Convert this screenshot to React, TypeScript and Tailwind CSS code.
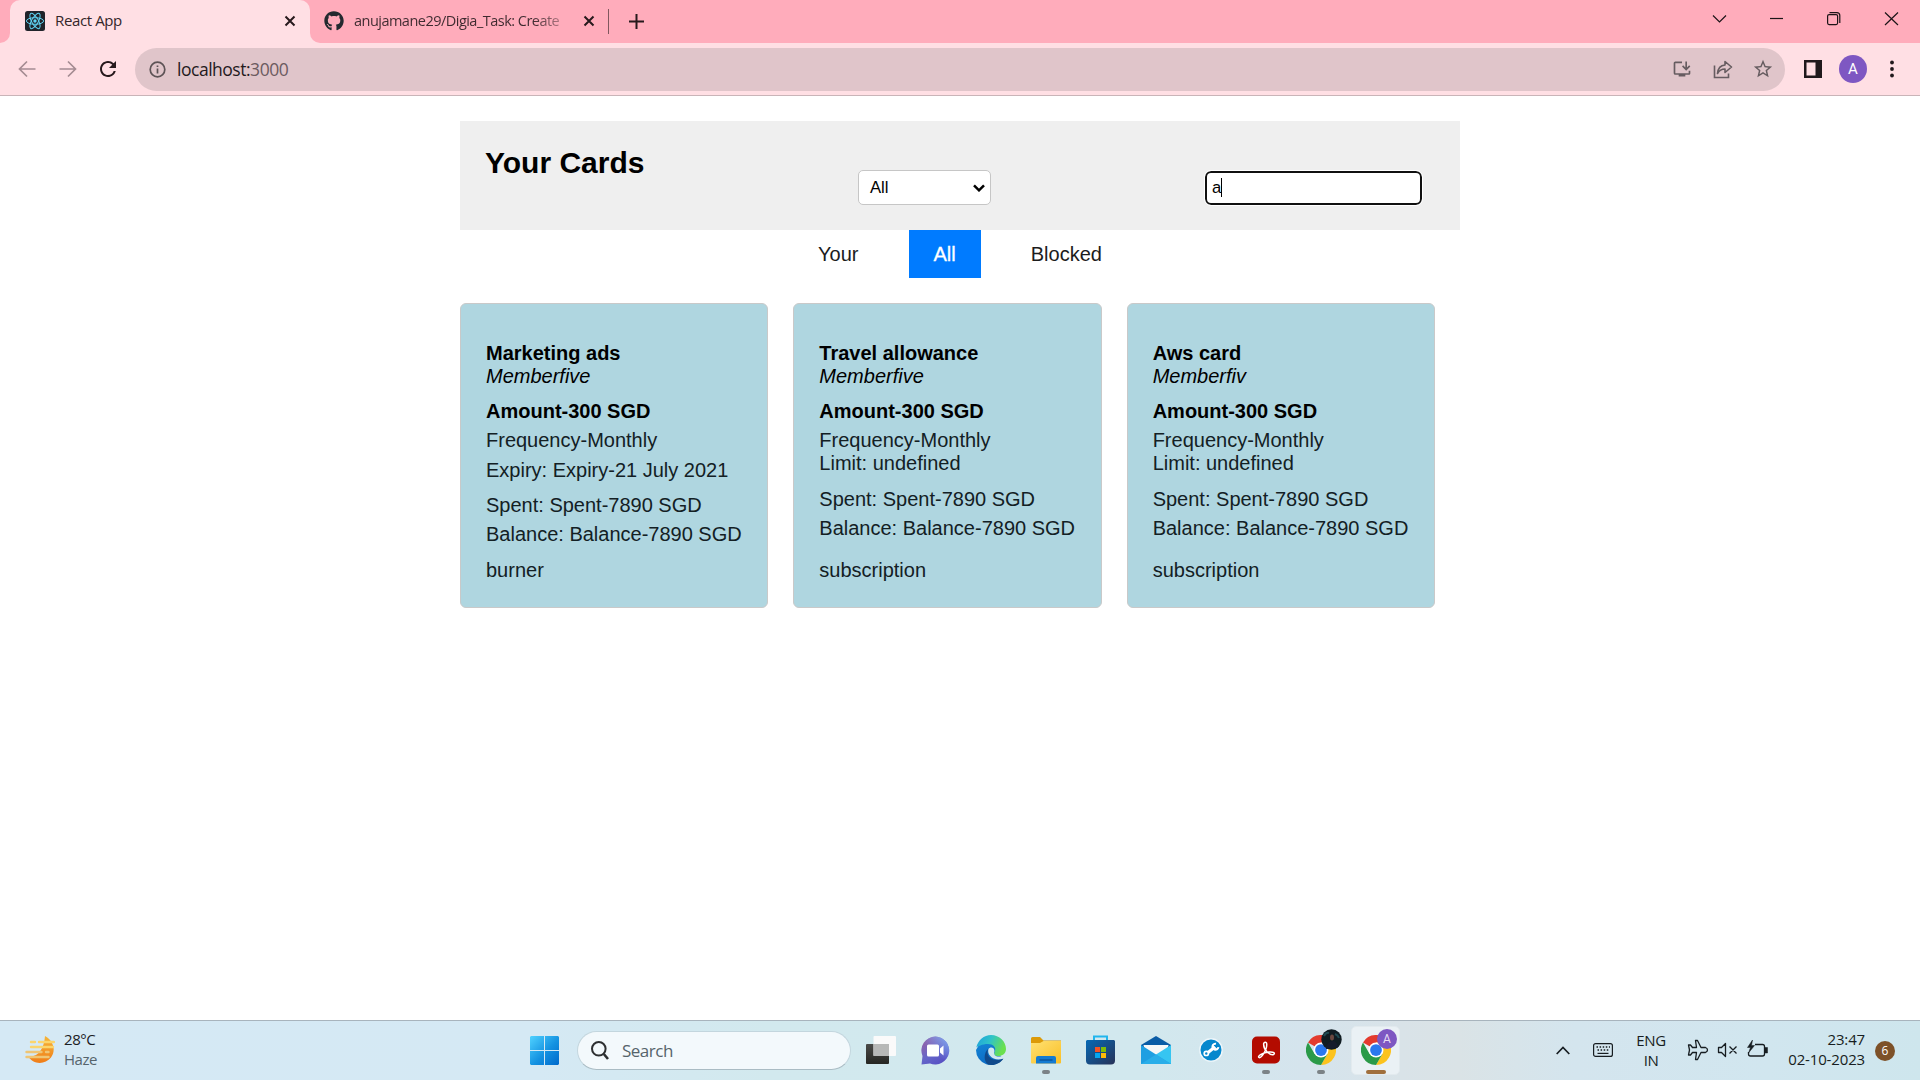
import React from "react";
import { FaGithub } from "react-icons/fa";
import { MdInstallDesktop, MdRefresh, MdStarBorder } from "react-icons/md";

type Card = {
  name: string;
  owner: string;
  expiry?: string;
  limit?: string;
  type: string;
};

const cards: Card[] = [
  { name: "Marketing ads", owner: "Memberfive", expiry: "Expiry-21 July 2021", type: "burner" },
  { name: "Travel allowance", owner: "Memberfive", limit: "undefined", type: "subscription" },
  { name: "Aws card", owner: "Memberfiv", limit: "undefined", type: "subscription" },
];

function CloseIcon() {
  return (
    <svg width="12" height="12" viewBox="0 0 12 12" stroke="#27191c" strokeWidth="2" className="shrink-0">
      <path d="M1.5 1.5 10.5 10.5M10.5 1.5 1.5 10.5" />
    </svg>
  );
}

function ReactLogo() {
  return (
    <svg width="20" height="20" viewBox="0 0 20 20" fill="none" stroke="#5fd3f3" strokeWidth="1" className="shrink-0">
      <rect width="20" height="20" rx="2.5" fill="#20232a" stroke="none" />
      <ellipse cx="10" cy="10" rx="8.6" ry="3.3" />
      <ellipse cx="10" cy="10" rx="8.6" ry="3.3" transform="rotate(60 10 10)" />
      <ellipse cx="10" cy="10" rx="8.6" ry="3.3" transform="rotate(120 10 10)" />
      <circle cx="10" cy="10" r="1.7" fill="#5fd3f3" stroke="none" />
    </svg>
  );
}

function TabStrip() {
  return (
    <div className="flex h-[43px] shrink-0 bg-[#ffacbb]">
      <div className="flex h-full w-[10px] bg-[#ffdfe4]">
        <div className="h-full w-full rounded-br-[10px] bg-[#ffacbb]" />
      </div>
      <div className="flex h-full w-[300px] items-center rounded-t-[10px] bg-[#ffdfe4] pr-[14px] pb-px pl-[15px]">
        <ReactLogo />
        <span className="ml-[10px] grow pb-px text-[15px] tracking-[-0.38px] text-[#33262a]">React App</span>
        <CloseIcon />
      </div>
      <div className="h-full w-[10px] bg-[#ffdfe4]">
        <div className="h-full w-full rounded-bl-[10px] bg-[#ffacbb]" />
      </div>
      <div className="flex h-full w-[288px] items-center pb-px pl-[4px]">
        <FaGithub size={20} color="#24292f" className="shrink-0" />
        <span className="ml-[10px] w-[213px] bg-linear-to-r from-[#3e2a2f] from-84% to-[#3e2a2f40] bg-clip-text pb-px text-[14.5px] tracking-[-0.52px] whitespace-nowrap text-transparent">
          anujamane29/Digia_Task: Create
        </span>
        <span className="ml-[16px]">
          <CloseIcon />
        </span>
      </div>
      <div className="mt-[9px] h-[25px] w-px bg-[#80575e]" />
      <svg width="15" height="15" viewBox="0 0 15 15" stroke="#27191c" strokeWidth="2" className="mt-[14px] ml-[20px]">
        <path d="M0 7.5H15M7.5 0V15" />
      </svg>
      <div className="grow" />
      <svg width="220" height="36" viewBox="-20 0 220 36" fill="none" stroke="#1c1417" strokeWidth="1.2">
        <path d="M-7 15.500-.5 22 6 15.500" />
        <path d="M50 18.500H63" />
        <rect x="107.600" y="14.600" width="10" height="10" rx="1.500" />
        <path d="M109.500 12.600h7.300a3 3 0 0 1 3 3v7.300" />
        <path d="M165 12.500 178 25M178 12.500 165 25" />
      </svg>
    </div>
  );
}

function Toolbar() {
  return (
    <div className="flex h-[53px] shrink-0 items-center border-b border-[#c9b4b8] bg-[#ffdfe4]">
      <svg width="100" height="20" viewBox="0 0 100 20" fill="none" stroke="#a58c92" strokeWidth="1.700">
        <path d="M35.500 10H20M27 2.500 19.500 10 27 17.500M59.500 10H75M68 2.500 75.500 10 68 17.500" />
      </svg>
      <div className="ml-[-4px] w-[39px]">
        <MdRefresh size={24} color="#27191c" />
      </div>
      <div className="flex h-[43px] w-[1650px] items-center rounded-full bg-[#e0c5ca] pr-[11px] pl-[14px]">
        <svg width="17" height="17" viewBox="0 0 17 17" fill="none" stroke="#5d5356" strokeWidth="1.700">
          <circle cx="8.500" cy="8.500" r="7.300" />
          <path d="M8.500 7.500V12.500M8.500 4.500V6" />
        </svg>
        <div className="ml-[11px] grow text-[17.5px] tracking-[-0.48px]">
          <span className="text-[#241a1d]">localhost:</span>
          <span className="text-[#6c5b60]">3000</span>
        </div>
        <MdInstallDesktop size={20} color="#665c60" />
        <svg width="20" height="20" viewBox="0 0 20 20" fill="none" stroke="#665c60" strokeWidth="1.600" className="ml-[21px]">
          <path d="M1.500 6.500V18.500H15.500V14.500" />
          <path d="M4.500 14.500C5 9 8 6.300 12 6V2.500L18.500 8 12 13.500V10C9 10 6.500 11 4.500 14.500Z" strokeLinejoin="round" />
        </svg>
        <MdStarBorder size={22} color="#665c60" className="ml-[19px]" />
      </div>
      <svg width="18" height="18" viewBox="0 0 18 18" className="ml-[19px]">
        <path fill="#20191c" fillRule="evenodd" d="M0 0H18V18H0ZM2.500 2.500V15.500H11.500V2.500Z" />
      </svg>
      <div className="ml-[17px] flex size-[28px] items-center justify-center rounded-full bg-[#7e57c2] font-[Roboto] text-[15px] text-white">
        A
      </div>
      <svg width="4" height="18" viewBox="0 0 4 18" fill="#20191c" className="ml-[23px]">
        <circle cx="2" cy="2.500" r="1.900" />
        <circle cx="2" cy="9" r="1.900" />
        <circle cx="2" cy="15.500" r="1.900" />
      </svg>
    </div>
  );
}

function CardView({ card }: { card: Card }) {
  return (
    <div className="flex h-[305px] flex-1 flex-col rounded-[6px] border border-[#c9c9c9] bg-[#afd6e0] px-[25px] pt-[38px] text-[20px] leading-[23px] text-[#132024]">
      <div className="font-bold text-black">{card.name}</div>
      <div className="text-black italic">{card.owner}</div>
      <div className="mt-[12px] font-bold text-black">Amount-300 SGD</div>
      <div className="mt-[6px]">Frequency-Monthly</div>
      {card.expiry ? (
        <div className="mt-[7px] mb-[6px]">Expiry: {card.expiry}</div>
      ) : (
        <div className="mb-[7px]">Limit: {card.limit}</div>
      )}
      <div className="mt-[6px]">Spent: Spent-7890 SGD</div>
      <div className="mt-[6px]">Balance: Balance-7890 SGD</div>
      <div className="mt-auto mb-[25px]">{card.type}</div>
    </div>
  );
}

function Page() {
  return (
    <main className="mx-auto w-[1000px] grow pt-[25px] font-['Liberation_Sans',Arial,sans-serif]">
      <header className="flex h-[109px] bg-[#efefef] pl-[25px]">
        <h2 className="w-[373px] pt-[24px] text-[30px] leading-[36px] font-bold text-black">Your Cards</h2>
        <div className="mt-[49px] flex h-[35px] w-[133px] items-center justify-between rounded-[5px] border border-[#c6c6c6] bg-white pr-[5px] pl-[11px] text-[16.67px] text-black">
          All
          <svg width="12" height="8" viewBox="0 0 12 8" fill="none" stroke="#000" strokeWidth="2.500">
            <path d="M1 1.300 6 6.300 11 1.300" />
          </svg>
        </div>
        <div className="mt-[50px] ml-[214px] flex h-[34px] w-[217px] items-center rounded-[6px] border-2 border-[#101010] bg-white pb-[2px] pl-[5px] text-[16.67px] text-black outline outline-white">
          a<span className="h-[19px] w-px bg-black" />
        </div>
      </header>
      <nav className="flex h-[48px] justify-center gap-[25px] text-[20px] text-[#1c1c1c]">
        <div className="flex items-center px-[25px]">Your</div>
        <div className="flex items-center bg-[#007bff] px-[25px] text-white [-webkit-text-stroke:0.3px_white]">All</div>
        <div className="flex items-center px-[25px]">Blocked</div>
      </nav>
      <section className="mt-[25px] flex gap-[25px] pr-[25px]">
        {cards.map((card) => (
          <CardView key={card.name} card={card} />
        ))}
      </section>
    </main>
  );
}

function Slot({ children, mark }: { children: React.ReactNode; mark?: boolean }) {
  return (
    <div className="relative flex h-full w-[55px] shrink-0 items-center justify-center pb-px">
      {children}
      {mark && <div className="absolute bottom-[6px] h-[4px] w-[8px] rounded-full bg-[#7b8286]" />}
    </div>
  );
}

function ChromeLogo() {
  return (
    <svg width="30" height="30" viewBox="0 0 48 48">
      <path fill="#e33b2e" d="M24 24 3.200 12A24 24 0 0 1 44.800 12H24Z" />
      <path fill="#fcc31e" d="M44.800 12A24 24 0 0 1 24 48L34.400 30 24 12Z" />
      <path fill="#2a9a48" d="M24 48A24 24 0 0 1 3.200 12L13.600 30 34.400 30Z" />
      <circle cx="24" cy="24" r="12" fill="#fff" />
      <circle cx="24" cy="24" r="9.400" fill="#2b78ee" />
    </svg>
  );
}

function Taskbar() {
  return (
    <footer className="flex h-[60px] shrink-0 items-center border-t border-[#a8b4bd] bg-[linear-gradient(90deg,#d5e9f5_0%,#d5e9f4_28%,#d2e9ee_40%,#d2e8ee_60%,#d5e4ed_68%,#d9e3e8_73%,#dae3e6_76%,#d4e5ee_82%,#d1e6ef_92%,#cee6ed_100%)]">
      <div className="flex h-full w-[517px] items-center pb-[2px] pl-[25px]">
        <svg width="30" height="28" viewBox="0 0 30 28">
          <defs>
            <linearGradient id="haze" x2="0" y2="1">
              <stop stopColor="#f5b63b" />
              <stop offset="1" stopColor="#f07d18" />
            </linearGradient>
          </defs>
          <path d="M20 0C29 5 31 15 26 21.500 20 29 8 29 3 20 12 22 19 14 20 0Z" fill="url(#haze)" />
          <g strokeWidth="2.400" strokeLinecap="round">
            <path d="M6 6h4M14 6h15M6 11h22" stroke="#fbd56c" />
            <path d="M1.500 16h15M21 16h2.500M1.500 21h22" stroke="#efc574" />
          </g>
        </svg>
        <div className="ml-[9px] pb-[2px] text-[15px] leading-[20px] tracking-[-0.45px]">
          <div className="text-[#1b2024]">28°C</div>
          <div className="text-[#56646c]">Haze</div>
        </div>
      </div>
      <Slot>
        <svg width="29" height="29" viewBox="0 0 29 29">
          <defs>
            <linearGradient id="win" x2="1" y2="1">
              <stop stopColor="#50d2ff" />
              <stop offset=".55" stopColor="#1492e1" />
              <stop offset="1" stopColor="#0069cb" />
            </linearGradient>
          </defs>
          <path fill="url(#win)" d="M1 0H14V14H0V1ZM15 0H28L29 1V14H15ZM0 15H14V29H1L0 28ZM15 15H29V28L28 29H15Z" />
        </svg>
      </Slot>
      <div className="ml-[5px] flex h-[39px] w-[274px] items-center rounded-full border border-[#c3d6de] border-b-[#aabcc4] bg-[#f3f9fc] pl-[13px]">
        <svg width="18" height="19" viewBox="0 0 18 19" fill="none" stroke="#2d2f31">
          <circle cx="7.800" cy="7.800" r="6.800" strokeWidth="2" />
          <path d="M12.800 13 17 18" strokeWidth="2.600" />
        </svg>
        <span className="ml-[13px] text-[17px] tracking-[-0.5px] text-[#56646b]">Search</span>
      </div>
      <div className="w-[2px]" />
      <Slot>
        <svg width="30" height="28" viewBox="0 0 30 28">
          <defs>
            <linearGradient id="tv" x2="0" y2="1">
              <stop stopColor="#4a4a48" />
              <stop offset="1" stopColor="#262622" />
            </linearGradient>
          </defs>
          <rect y="8" width="23" height="20" rx="1" fill="url(#tv)" />
          <rect x="7.500" width="22.500" height="20" rx="1" fill="#fafafa" />
          <rect x="7.500" y="8" width="15.500" height="12" fill="#b7b8b7" />
        </svg>
      </Slot>
      <Slot>
        <svg width="29" height="29" viewBox="0 0 29 29">
          <defs>
            <linearGradient id="meet" x1=".2" y1=".2" x2=".7" y2="1">
              <stop stopColor="#8b62ae" />
              <stop offset=".5" stopColor="#6566c9" />
              <stop offset="1" stopColor="#574fc3" />
            </linearGradient>
            <linearGradient id="meetGlow" x1="1" y1="0" x2=".5" y2=".6">
              <stop stopColor="#7fb0f5" />
              <stop offset="1" stopColor="#7fa0f0" stopOpacity="0" />
            </linearGradient>
          </defs>
          <path d="M14.500.500A14 14 0 1 1 9 27.500L.500 28.500 1.500 20A14 14 0 0 1 14.500.500Z" fill="url(#meet)" />
          <path d="M14.500.500A14 14 0 1 1 9 27.500L.500 28.500 1.500 20A14 14 0 0 1 14.500.500Z" fill="url(#meetGlow)" />
          <rect x="6" y="8.500" width="12" height="12" rx="1.500" fill="#fff" />
          <path d="M19 12.500 22.500 9.500V19.500L19 16.500Z" fill="#fff" />
        </svg>
      </Slot>
      <Slot>
        <svg width="30" height="30" viewBox="0 0 30 30">
          <defs>
            <linearGradient id="edgeTop" x2="1" y2=".35">
              <stop stopColor="#1d9fe0" />
              <stop offset=".5" stopColor="#2fc3c8" />
              <stop offset="1" stopColor="#6ae04e" />
            </linearGradient>
            <linearGradient id="edgeBlue" x2=".3" y2="1">
              <stop stopColor="#1487d8" />
              <stop offset="1" stopColor="#0d6cc4" />
            </linearGradient>
          </defs>
          <path d="M0 15A15 15 0 0 0 27 24L24 20 15 5 4 8Z" fill="url(#edgeBlue)" />
          <path d="M.300 12.500C2 5 8 0 15 0 23.500 0 30 6.500 30 14 30 18.500 26.500 21 22 21 19 21 17.500 19.500 18.500 17.500 21 12 17 9 12 9 6 9 1.500 11.500.300 12.500Z" fill="url(#edgeTop)" />
          <path d="M12.500 13.500C9 20 15 28 27.500 23.500 24 29 17.500 31 12 29.500 7 26 8 17 12.500 13.500Z" fill="#114a8b" />
          <path d="M12.500 14C14 11.500 18.500 12 18.500 16 17 20 20 22 24 21.500 26 21.300 27 21 28 20.500L27.500 23.500C18 27 10.500 20 12.500 14Z" fill="#d3e8ef" />
        </svg>
      </Slot>
      <Slot mark>
        <svg width="30" height="27" viewBox="0 0 30 27">
          <defs>
            <linearGradient id="folder" x2="1" y2="1">
              <stop stopColor="#ffe173" />
              <stop offset="1" stopColor="#fabf26" />
            </linearGradient>
          </defs>
          <path d="M0 1.500Q0 0 1.500 0H9L12.500 3.500H30V9H0Z" fill="#dc9a08" />
          <path d="M0 6H9L12.500 4H30V25.500Q30 26.500 29 26.500H1Q0 26.500 0 25.500Z" fill="url(#folder)" />
          <path d="M5 26.500V21Q5 19 7 19H23Q25 19 25 21V26.500Z" fill="#147bd1" />
          <path d="M8.500 23H21.500" stroke="#0b559c" strokeWidth="1.500" />
        </svg>
      </Slot>
      <Slot>
        <svg width="29" height="30" viewBox="0 0 29 30">
          <defs>
            <linearGradient id="store" x2="1" y2="1">
              <stop stopColor="#0669b5" />
              <stop offset="1" stopColor="#283257" />
            </linearGradient>
          </defs>
          <path d="M8 6V1.500H21V6" fill="none" stroke="#22b6ed" strokeWidth="2" />
          <path d="M1 5H28L29 6V25.500Q29 29.500 25 29.500H4Q0 29.500 0 25.500V6Z" fill="url(#store)" />
          <path d="M9 12h5v5H9Z" fill="#f35325" />
          <path d="M15 12h5v5H15Z" fill="#81bc06" />
          <path d="M9 18h5v5H9Z" fill="#05a6f0" />
          <path d="M15 18h5v5H15Z" fill="#ffba08" />
        </svg>
      </Slot>
      <Slot>
        <svg width="30" height="28" viewBox="0 0 30 28">
          <path d="M0 9 15 0 30 9V14H0Z" fill="#0a5ca6" />
          <path d="M2.500 9H27.500L25 20H5Z" fill="#f6f7f8" />
          <path d="M30 9V28H0Z" fill="#36c5f1" />
          <path d="M0 9 30 28H0Z" fill="#1f9fe2" />
          <path d="M15 18.500 30 28H0Z" fill="#29aee9" />
        </svg>
      </Slot>
      <Slot>
        <svg width="24" height="24" viewBox="0 0 24 24" fill="none" stroke="#fff">
          <circle cx="12" cy="12" r="11.200" fill="#0587cd" stroke="#eef6fa" strokeWidth="1.400" />
          <path d="M9 14.500 14 10.500" strokeWidth="3" />
          <circle cx="7.300" cy="15.400" r="2.100" strokeWidth="1.700" />
          <path d="M17 5.800A3 3 0 1 0 19.400 9.200" strokeWidth="2" />
          <path d="M14.200 7.500 13.500 10.500 17.500 11.200 16 9Z" fill="#fff" strokeWidth=".8" />
        </svg>
      </Slot>
      <Slot mark>
        <svg width="28" height="28" viewBox="0 0 28 28" className="mb-px">
          <rect y=".5" width="28" height="27" rx="5" fill="#b30b00" />
          <path
            d="M12.500 6.500C15.500 5 15 10 13.800 13.500 12 18 8.500 22.500 7 21.500 5 20 11 16.500 17 16 22 15.500 23.500 17.500 21.500 18.500 18.500 19.500 11 14.500 11.700 7.500Q12 6.500 12.500 6.500Z"
            fill="none"
            stroke="#fff"
            strokeWidth="1.500"
          />
        </svg>
      </Slot>
      <Slot mark>
        <ChromeLogo />
        <svg width="21" height="21" viewBox="0 0 21 21" className="absolute top-[8px] left-[28px]">
          <circle cx="10.500" cy="10.500" r="10.200" fill="#101c22" />
          <path d="M5 20C5 15 8 13.500 9.500 12.500L13 12C16 13.500 17 16 17 18.500Z" fill="#161b2b" />
          <path d="M3 7Q5 3 8 4M14 5Q17 6 18 9" stroke="#1f4a52" strokeWidth="2" fill="none" />
          <ellipse cx="11" cy="8.500" rx="2" ry="3" fill="#6a4840" />
        </svg>
      </Slot>
      <div className="relative mx-[3px] flex size-[49px] shrink-0 items-center justify-center rounded-[5px] border border-[#e2eaee] bg-[#eaf1f5] pb-px">
        <ChromeLogo />
        <div className="absolute top-[2px] right-[2px] flex size-[20px] items-center justify-center rounded-full bg-[#7e57c2] font-[Roboto] text-[12px] text-[#e8def5]">
          A
        </div>
        <div className="absolute bottom-0 h-[4px] w-[20px] rounded-full bg-[#a06f3c]" />
      </div>
      <div className="grow" />
      <div className="flex h-full w-[364px] shrink-0 items-center text-[15px] leading-[20px] text-[#171d21]">
        <svg width="14" height="9" viewBox="0 0 14 9" fill="none" stroke="#171d21" strokeWidth="1.700">
          <path d="M.700 8 7 1.500 13.300 8" />
        </svg>
        <svg width="20" height="14" viewBox="0 0 20 14" fill="none" stroke="#171d21" strokeWidth="1.200" className="ml-[23px] mb-[2px]">
          <rect x=".600" y=".600" width="18.800" height="12.800" rx="2" />
          <path d="M3.500 4H17M4.500 7H16" strokeDasharray="1.500 1.600" strokeWidth="1.500" />
          <path d="M4.500 10.400H15.500" />
        </svg>
        <div className="ml-[23px] w-[30px] pb-[2px] text-center tracking-[-0.4px]">
          <div>ENG</div>
          <div>IN</div>
        </div>
        <svg width="82" height="22" viewBox="0 0 82 22" fill="none" stroke="#171d21" strokeWidth="1.300" strokeLinejoin="round" className="mb-px ml-[21px]">
          <path d="M8.500 1.500H10.500L14 8.500H18.500Q20.500 9.300 20.500 11 20.500 12.700 18.500 13.500H14L10.500 20.500H8.500L9.500 13.500H5.500L3.500 16H1.500L2.500 11 1.500 6H3.500L5.500 8.500H9.500Z" />
          <path d="M31.500 8.500H34.500L38.500 4.500V17.500L34.500 13.500H31.500ZM42.500 7.500 49.500 14.500M49.500 7.500 42.500 14.500" />
          <path d="M68 5.500H75.500Q77.500 5.500 77.500 7.500V15Q77.500 17 75.500 17H63.500Q61.500 17 61.500 15V13" />
          <path d="M78 8.500H80.500V14H78Z" fill="#171d21" strokeWidth=".5" />
          <path d="M65.500 1 60.500 8.500H63.500L61.500 14 67.500 6.500H64.500Z" fill="#171d21" strokeWidth=".5" />
        </svg>
        <div className="ml-[6px] w-[90px] pb-[4px] text-right tracking-[-0.15px]">
          <div>23:47</div>
          <div>02-10-2023</div>
        </div>
        <div className="ml-[10px] flex size-[20px] items-center justify-center rounded-full bg-[#7d5128] text-[12px] text-white">6</div>
      </div>
    </footer>
  );
}

export default function App() {
  return (
    <div className="flex h-[1080px] w-[1920px] flex-col overflow-hidden bg-white font-['Open_Sans','Noto_Sans',sans-serif]">
      <TabStrip />
      <Toolbar />
      <Page />
      <Taskbar />
    </div>
  );
}
